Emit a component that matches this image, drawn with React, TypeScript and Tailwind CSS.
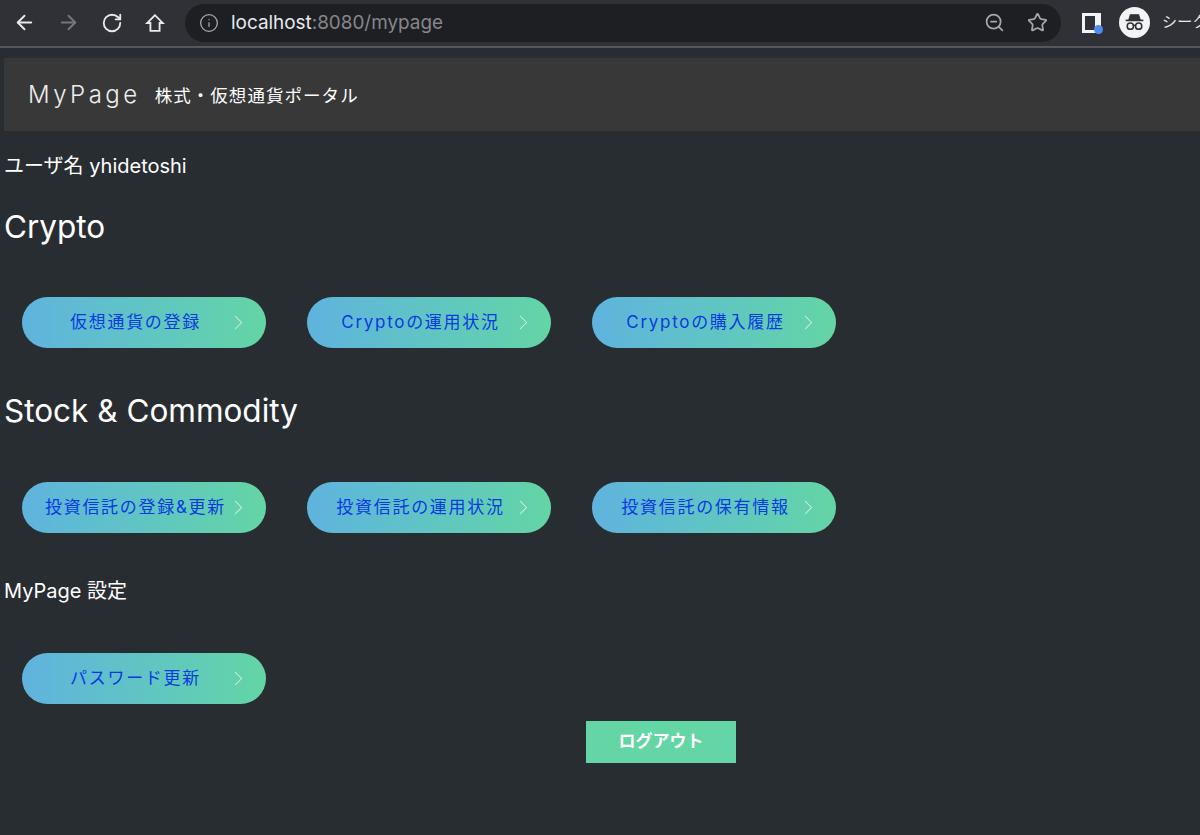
import React from "react";
import { ArrowLeft, ArrowRight, RotateCw, Info, ZoomOut, Star, ChevronRight } from "lucide-react";

const FONT = "font-['Inter','Noto_Sans_CJK_JP',sans-serif]";

const Pill: React.FC<{ label: string }> = ({ label }) => {
  return (
    <a className="relative flex h-[51px] w-[244px] shrink-0 items-center justify-center rounded-full bg-gradient-to-r from-[#5fb3de] to-[#64d5a4] pr-[17px] text-[17px] tracking-[0.1em] text-[#0a3ae0]">
      <span className="whitespace-nowrap pt-[1px]">{label}</span>
      <ChevronRight className="absolute right-[15px] top-[13px] h-[25px] w-[25px] text-[#d5efe6]" strokeWidth={1} />
    </a>
  );
};

const PillRow: React.FC<{ items: string[]; className?: string }> = ({ items, className }) => {
  return <div className={`flex gap-[41px] pl-[22px] ${className ?? ""}`}>{items.map((i) => <Pill key={i} label={i} />)}</div>;
};

const Toolbar = () => (
  <div className="flex h-[48px] items-center border-b-2 border-[#55575b] bg-[#2f3136] pb-[1px] text-[#e8eaed]">
    <div className="ml-[13px] flex items-center gap-[21px]">
      <ArrowLeft className="h-[23px] w-[23px]" strokeWidth={2} />
      <ArrowRight className="h-[23px] w-[23px] text-[#75777b]" strokeWidth={2} />
      <RotateCw className="h-[22px] w-[22px]" strokeWidth={2} />
      <svg viewBox="0 0 24 24" className="h-[22px] w-[22px]" fill="none" stroke="currentColor" strokeWidth="2">
        <path d="M12 3.5 3.5 12H7v8.5h10V12h3.5z" strokeLinejoin="miter" />
      </svg>
    </div>
    <div className="ml-[19px] flex h-[38px] w-[876px] shrink-0 items-center rounded-full bg-[#1d1f23] pl-[14px] pr-[13px]">
      <Info className="h-[20px] w-[20px] text-[#a5a7ab]" strokeWidth={1.6} />
      <span className="ml-[12px] pt-[2px] text-[18.9px]">
        localhost<span className="text-[#85878b]">:8080/mypage</span>
      </span>
      <ZoomOut className="ml-auto h-[21px] w-[21px] text-[#a5a7ab]" strokeWidth={2} />
      <Star className="ml-[22px] h-[21px] w-[21px] text-[#a5a7ab]" strokeWidth={2} />
    </div>
    <div className="relative ml-[21px] h-[20px] w-[19px] shrink-0 border-[3px] border-r-[6px] border-[#f1f3f4]">
      <span className="absolute -bottom-[4px] -right-[8px] h-[9px] w-[9px] rounded-full bg-[#4f8df0]" />
    </div>
    <div className="ml-[18px] flex h-[31px] w-[31px] shrink-0 items-center justify-center rounded-full bg-[#f1f3f4]">
      <svg viewBox="0 0 24 24" className="h-[25px] w-[25px]" fill="none" stroke="#2f3136">
        <path d="M8 4.5h8l1.5 5h-11z" fill="#2f3136" />
        <path d="M3.5 10h17" strokeWidth="1.6" />
        <circle cx="8" cy="15.5" r="3" strokeWidth="1.5" />
        <circle cx="16" cy="15.5" r="3" strokeWidth="1.5" />
        <path d="M11 15c.7-.5 1.3-.5 2 0" strokeWidth="1.2" />
      </svg>
    </div>
    <span className="ml-[12px] whitespace-nowrap text-[15px] tracking-[0.02em]">シークレット</span>
  </div>
);

const App: React.FC = () => {
  return (
    <div className={`h-[835px] w-[1200px] overflow-hidden bg-[#282d31] text-white ${FONT}`}>
      <Toolbar />
      <div className="ml-[4px] mt-[10px] flex h-[73px] items-center bg-[#383838] pl-[24px]">
        <span className="text-[24px] font-light tracking-[0.145em] text-[#eeeeee]">MyPage</span>
        <span className="ml-[14px] pt-[3px] text-[17.5px] tracking-[0.06em]">株式・仮想通貨ポータル</span>
      </div>
      <div className="pl-[4px]">
        <p className="mt-[22px] h-[27px] text-[20px] leading-[27px]">ユーザ名 yhidetoshi</p>
        <h2 className="mt-[27px] text-[31.5px] leading-[40px]">Crypto</h2>
      </div>
      <PillRow className="mt-[50px]" items={["仮想通貨の登録", "Cryptoの運用状況", "Cryptoの購入履歴"]} />
      <h2 className="mt-[43px] pl-[4px] text-[31.5px] leading-[40px]">Stock &amp; Commodity</h2>
      <PillRow className="mt-[51px]" items={["投資信託の登録&更新", "投資信託の運用状況", "投資信託の保有情報"]} />
      <p className="mt-[45px] pl-[4px] text-[20px] leading-[27px]">MyPage 設定</p>
      <PillRow className="mt-[48px]" items={["パスワード更新"]} />
      <div className="ml-[586px] mt-[17px] flex h-[42px] w-[150px] items-center justify-center bg-[#64d5a4] text-[17px] font-bold">
        ログアウト
      </div>
    </div>
  );
};

export default App;
